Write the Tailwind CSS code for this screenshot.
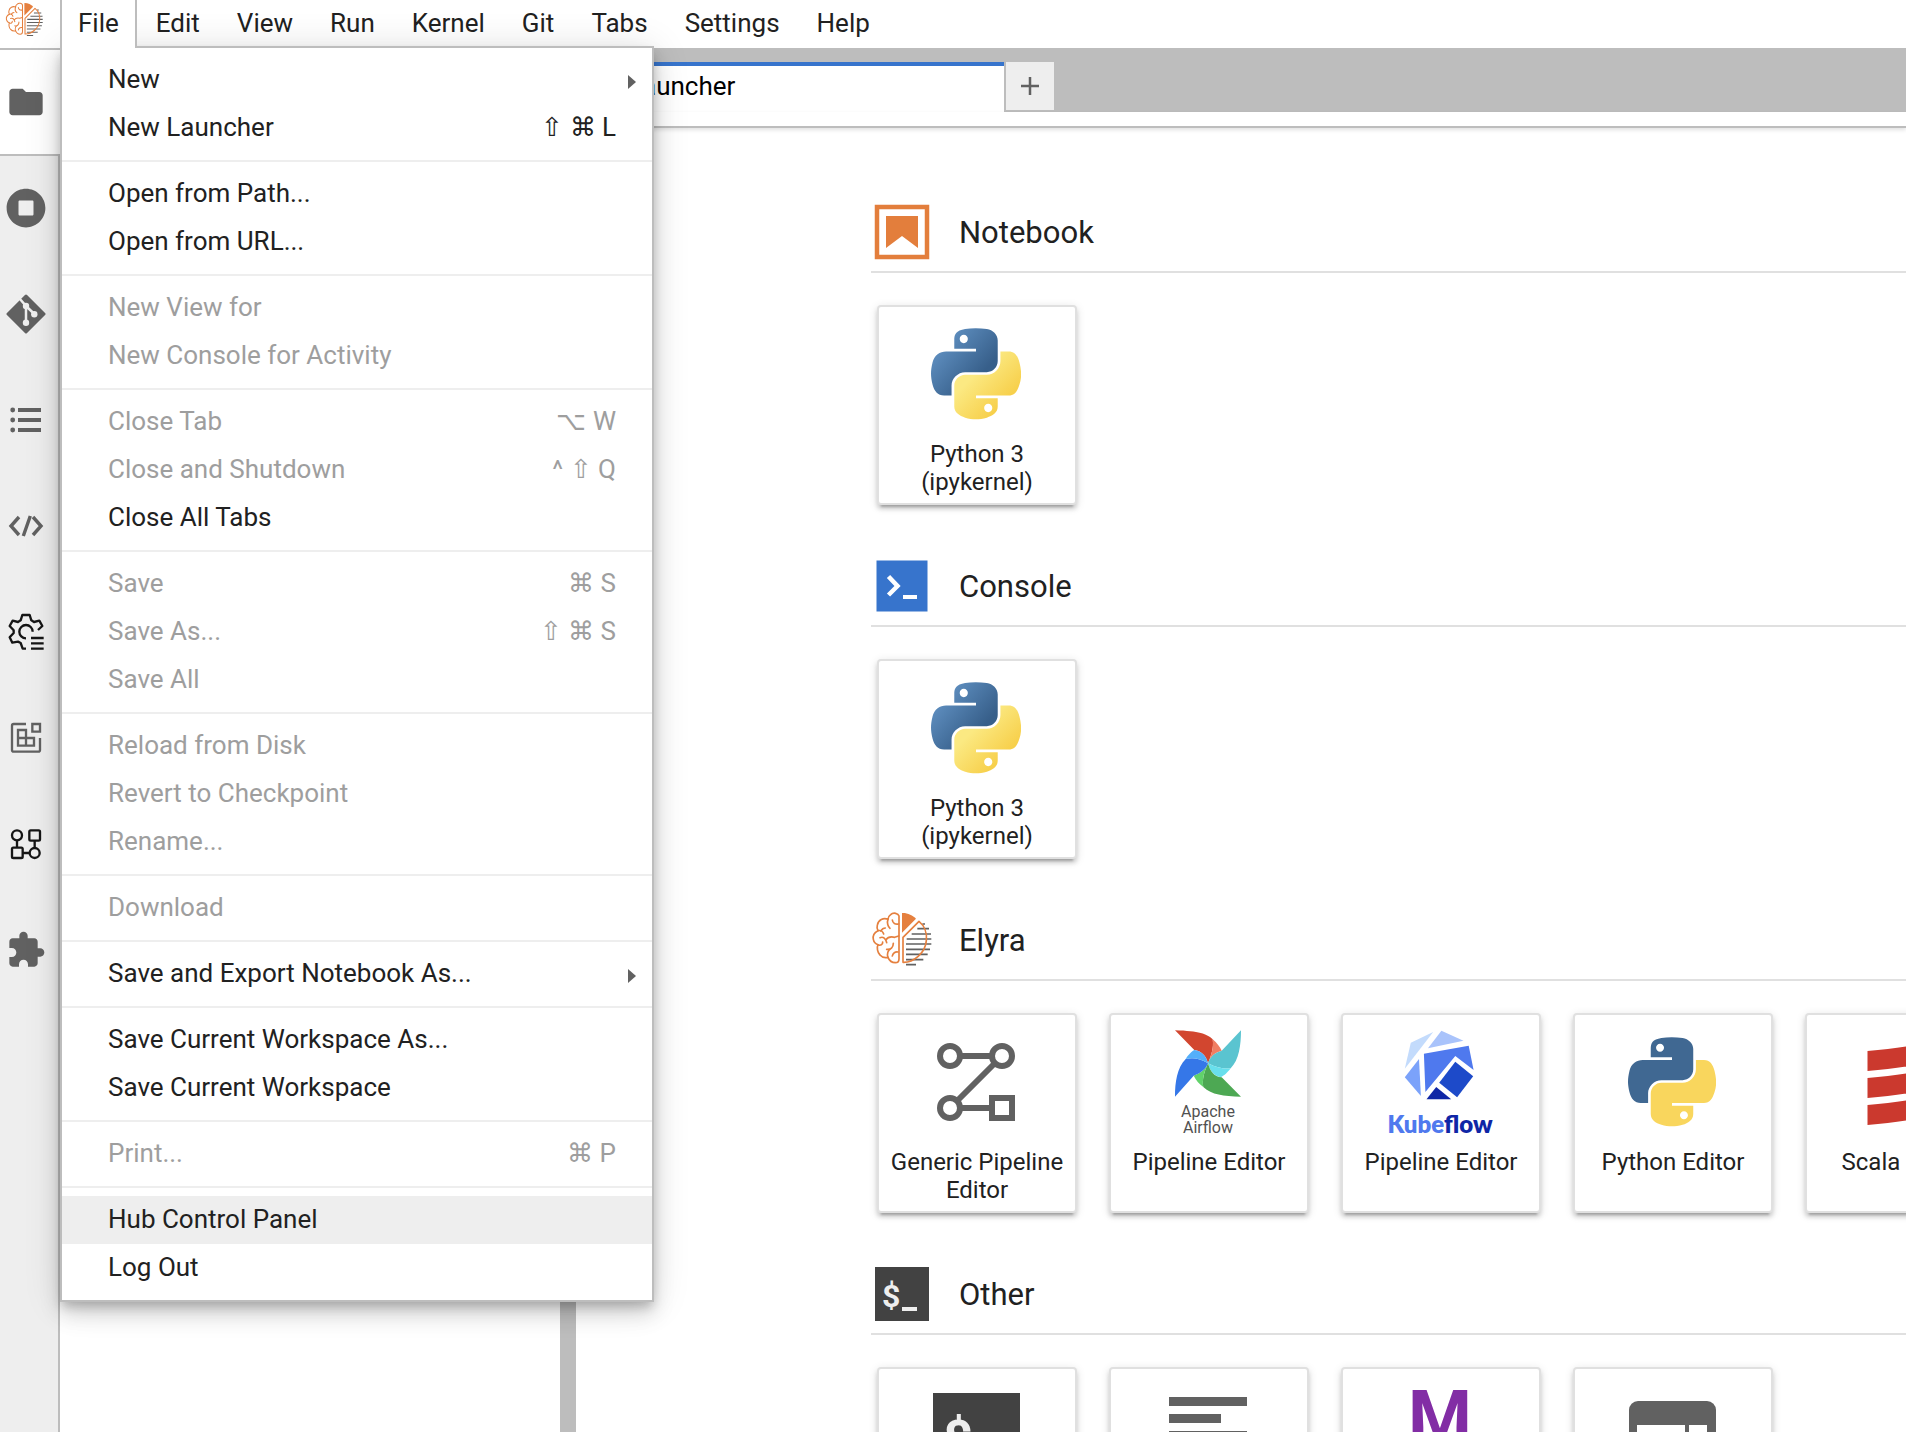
<!DOCTYPE html>
<html lang="en">
<head>
  <meta charset="UTF-8" />
  <meta name="viewport" content="width=device-width, initial-scale=1" />
  <title>JupyterLab</title>
  <script src="https://cdn.jsdelivr.net/npm/@tailwindcss/browser@4"></script>
</head>
<body class="flex h-screen flex-col overflow-hidden bg-white font-['Roboto','Noto_Sans',sans-serif] text-[26px] text-[#212121]">

<!-- Shared icons -->
<svg class="hidden" aria-hidden="true">
  <symbol id="elyra" viewBox="33 24 192 192">
    <g stroke="#616161" stroke-width="5">
      <path d="M187 72h8M172 86h35M155 102h58M140 117h74M138 132h76M138 148h72M138 163h65M138 179h52M138 194h30" />
    </g>
    <g fill="none" stroke="#e5803f" stroke-width="5" stroke-linecap="round" stroke-linejoin="round">
      <path d="M117 48C115 40 100 36 92 44C86 48 84 54 84 58C70 52 55 60 52 75C50 82 52 88 54 92C42 98 38 108 40 118C42 128 48 132 54 134C50 142 52 158 60 165C66 172 76 174 84 172C88 182 96 188 106 188C114 188 117 184 117 176Z" />
      <path d="M84 58C80 68 84 80 90 85M97 60C98 70 106 74 116 72M54 92C62 90 69 95 71 102M62 93C66 87 72 84 76 84M60 113C70 109 77 115 80 128M77 120C82 113 92 109 104 112L116 108M54 134C61 138 69 134 68 126M100 130C100 142 92 150 80 148M84 172C80 162 84 150 92 146M97 168C98 160 106 154 114 156" />
      <path d="M129 112L177 64C192 76 202 98 199 122C196 160 160 188 129 187Z" />
    </g>
    <path fill="#e5803f" d="M126 39C142 38 158 46 168 56L126 98Z" />
  </symbol>
  <symbol id="python" viewBox="0 0 111 113">
    <path fill-rule="evenodd" d="M54.92 0C50.34.02 45.96.41 42.11 1.09 30.76 3.1 28.7 7.29 28.7 15.03V25.25H55.51V28.66H18.64C10.85 28.66 4.02 33.34 1.89 42.25-.57 52.46-.68 58.84 1.89 69.5 3.79 77.44 8.35 83.09 16.14 83.09H25.36V70.84C25.36 61.99 33.01 54.19 42.11 54.19H68.89C76.34 54.19 82.29 48.05 82.29 40.56V15.03C82.29 7.77 76.16 2.31 68.89 1.09 64.28.33 59.5-.02 54.92 0ZM40.42 8.22C43.19 8.22 45.45 10.52 45.45 13.34 45.45 16.16 43.19 18.44 40.42 18.44 37.64 18.44 35.39 16.16 35.39 13.34 35.39 10.52 37.64 8.22 40.42 8.22Z" />
    <path fill="var(--py-yellow)" fill-rule="evenodd" d="M85.64 28.66V40.56C85.64 49.79 77.81 57.56 68.89 57.56H42.11C34.77 57.56 28.7 63.84 28.7 71.19V96.72C28.7 103.99 35.02 108.26 42.11 110.34 50.59 112.84 58.73 113.29 68.89 110.34 75.64 108.39 82.29 104.46 82.29 96.72V86.5H55.51V83.09H95.7C103.49 83.09 106.4 77.66 109.11 69.5 111.91 61.1 111.79 53.03 109.11 42.25 107.18 34.49 103.5 28.66 95.7 28.66ZM70.58 93.31C73.35 93.31 75.61 95.59 75.61 98.41 75.61 101.23 73.35 103.53 70.58 103.53 67.81 103.53 65.54 101.23 65.54 98.41 65.54 95.59 67.81 93.31 70.58 93.31Z" />
  </symbol>
</svg>
<svg class="absolute size-0" aria-hidden="true">
  <defs>
    <linearGradient id="pyBlue" x1="0" y1="0.1" x2="0.8" y2="0.8"><stop offset="0.1" stop-color="#6394c6" /><stop offset="0.9" stop-color="#375f8a" /></linearGradient>
    <linearGradient id="pyYellow" x1="0.2" y1="0.2" x2="0.8" y2="0.8"><stop offset="0.2" stop-color="#fbe982" /><stop offset="0.9" stop-color="#f7d04c" /></linearGradient>
  </defs>
</svg>

<!-- Menu bar -->
<header class="flex h-[50px] shrink-0 border-b-2 border-[#bdbdbd]">
  <div class="w-[60px] pl-[5px]">
    <svg class="size-10"><use href="#elyra" /></svg>
  </div>
  <nav class="flex h-12 gap-px">
    <div class="relative">
      <button class="relative z-20 h-12 border-x-2 border-[#bdbdbd] bg-white px-4 pb-[2px]">File</button>
      <ul id="fileMenu" role="menu" class="absolute top-[46px] left-0 z-10 w-[594px] border-2 border-[#bdbdbd] bg-white py-2 shadow-[0_6px_10px_-2px_rgba(0,0,0,0.2),0_12px_20px_rgba(0,0,0,0.14),0_2px_36px_rgba(0,0,0,0.12)]"></ul>
    </div>
    <button class="border-x-2 border-transparent px-4 pb-[2px]">Edit</button>
    <button class="border-x-2 border-transparent px-4 pb-[2px]">View</button>
    <button class="border-x-2 border-transparent px-4 pb-[2px]">Run</button>
    <button class="border-x-2 border-transparent px-4 pb-[2px]">Kernel</button>
    <button class="border-x-2 border-transparent px-4 pb-[2px]">Git</button>
    <button class="border-x-2 border-transparent px-4 pb-[2px]">Tabs</button>
    <button class="border-x-2 border-transparent px-4 pb-[2px]">Settings</button>
    <button class="border-x-2 border-transparent px-4 pb-[2px]">Help</button>
  </nav>
</header>

<div class="flex min-h-0 flex-1">
  <!-- Left activity bar -->
  <aside class="flex w-[60px] shrink-0 flex-col bg-[#eeeeee]">
    <button aria-label="File Browser" class="h-[106px] border-b-2 border-[#bdbdbd] bg-white pl-[6px]">
      <svg class="size-10" viewBox="0 0 24 24" fill="#616161"><path d="M10 4H4c-1.1 0-1.99.9-1.99 2L2 18c0 1.1.9 2 2 2h16c1.1 0 2-.9 2-2V8c0-1.1-.9-2-2-2h-8l-2-2z" /></svg>
    </button>
    <button aria-label="Running Terminals and Kernels" class="h-[106px] border-r-2 border-[#bdbdbd] pb-[2px] pl-[6px]">
      <svg class="size-10" viewBox="0 0 512 512" fill="#616161"><path d="M256 8C119 8 8 119 8 256s111 248 248 248 248-111 248-248S393 8 256 8zm96 328c0 8.8-7.2 16-16 16H176c-8.8 0-16-7.2-16-16V176c0-8.8 7.2-16 16-16h160c8.8 0 16 7.2 16 16v160z" /></svg>
    </button>
    <button aria-label="Git" class="h-[106px] border-r-2 border-[#bdbdbd] pb-[2px] pl-[6px]">
      <svg class="size-10" viewBox="0 0 40 40"><path d="M20 2L38 20L20 38L2 20Z" fill="#616161" stroke="#616161" stroke-width="3" stroke-linejoin="round" /><g stroke="#eeeeee" stroke-width="2.5"><path d="M13.5 4.5L20 12V28M20 12L28.3 20" fill="none" /><g fill="#eeeeee" stroke="none"><circle cx="20" cy="12" r="3.2" /><circle cx="20" cy="28.7" r="3.2" /><circle cx="28.3" cy="20.3" r="3.2" /></g></g></svg>
    </button>
    <button aria-label="Table of Contents" class="h-[106px] border-r-2 border-[#bdbdbd] pb-[2px] pl-[6px]">
      <svg class="size-10" viewBox="0 0 40 40" fill="#616161"><circle cx="6.7" cy="10" r="2.4" /><circle cx="6.7" cy="20" r="2.4" /><circle cx="6.7" cy="30" r="2.4" /><path d="M12 8h23v4H12zM12 18h23v4H12zM12 28h23v4H12z" /></svg>
    </button>
    <button aria-label="Code Snippets" class="h-[106px] border-r-2 border-[#bdbdbd] pb-[2px] pl-[6px]">
      <svg class="size-10" viewBox="0 0 40 40" fill="none" stroke="#616161" stroke-width="3.4"><path d="M13 11L5 20L13 29M27 11L35 20L27 29M24.3 10L17.3 30" /></svg>
    </button>
    <button aria-label="Runtimes" class="h-[106px] border-r-2 border-[#bdbdbd] pb-[2px] pl-[6px]">
      <svg class="size-10" viewBox="18 156 120 120" fill="none" stroke="#161616" stroke-width="7" stroke-linejoin="round"><path d="M78 266H68L62 249L54 245L37 248L29 232L41 219V211L29 198L38 182L54 186L62 181L67 165H89L94 181L102 186L118 182L127 198L114 210M98 215A20 20 0 1 0 78 235M93 234H131M93 250H131M93 266H131" /></svg>
    </button>
    <button aria-label="Component Catalogs" class="h-[106px] border-r-2 border-[#bdbdbd] pb-[2px] pl-[6px]">
      <svg class="size-10" viewBox="18 474 120 120" fill="none" stroke="#616161" stroke-width="7"><path d="M78 492H41Q36 492 36 497V570Q36 575 41 575H115Q120 575 120 570V534M97 492H120V515H97ZM54 510H78V534H54ZM54 534H78V557H54ZM78 534H102V557H78Z" /></svg>
    </button>
    <button aria-label="Pipelines" class="h-[106px] border-r-2 border-[#bdbdbd] pb-[2px] pl-[6px]">
      <svg class="size-10" viewBox="18 792 120 120" fill="none" stroke="#161616" stroke-width="7"><circle cx="51" cy="826" r="15" /><rect x="88" y="811" width="32" height="31" rx="4" /><rect x="36" y="863" width="32" height="31" rx="4" /><circle cx="104" cy="879" r="15" /><path d="M51 841V863M104 841V864M68 879H89" /></svg>
    </button>
    <button aria-label="Extension Manager" class="h-[106px] border-r-2 border-[#bdbdbd] pb-[2px] pl-[6px]">
      <svg class="size-10" viewBox="0 0 24 24" fill="#616161"><path d="M20.5 11H19V7c0-1.1-.9-2-2-2h-4V3.5C13 2.12 11.88 1 10.5 1S8 2.12 8 3.5V5H4c-1.1 0-1.99.9-1.99 2v3.8H3.5c1.49 0 2.7 1.21 2.7 2.7s-1.21 2.7-2.7 2.7H2V20c0 1.1.9 2 2 2h3.8v-1.5c0-1.49 1.21-2.7 2.7-2.7 1.49 0 2.7 1.21 2.7 2.7V22H17c1.1 0 2-.9 2-2v-4h1.5c1.38 0 2.5-1.12 2.5-2.5S21.88 11 20.5 11z" /></svg>
    </button>
    <div class="flex-1 border-r-2 border-[#bdbdbd]"></div>
  </aside>

  <!-- File browser panel and splitter -->
  <section class="w-[500px] shrink-0 bg-white"></section>
  <div class="w-4 shrink-0 bg-[#bdbdbd]"></div>

  <!-- Dock -->
  <main class="flex min-w-0 flex-1 flex-col">
    <div class="flex h-[62px] shrink-0 items-start bg-[#bdbdbd] pt-3">
      <div role="tab" class="flex h-[50px] w-[428px] items-start gap-2 border-t-4 border-[#3774cc] bg-white pl-3 leading-10 text-black">
        <svg class="mt-1 size-8" viewBox="0 0 24 24" fill="#616161"><path d="M19 19H5V5h7V3H5a2 2 0 0 0-2 2v14a2 2 0 0 0 2 2h14c1.1 0 2-.9 2-2v-7h-2v7zM14 3v2h3.59l-9.83 9.83 1.41 1.41L19 6.41V10h2V3h-7z" /></svg>
        Launcher
      </div>
      <button aria-label="New Launcher" class="ml-[2px] flex size-12 items-center justify-center bg-[#eeeeee]">
        <svg class="size-5" viewBox="0 0 20 20" stroke="#616161" stroke-width="2.5"><path d="M10 1V19M1 10H19" /></svg>
      </button>
    </div>
    <div class="h-4 shrink-0 border-b-2 border-[#bdbdbd] shadow-[0_2px_4px_rgba(0,0,0,0.12)]"></div>

    <div class="min-h-0 flex-1 overflow-hidden pt-[72px] pl-[295px]">
      <section class="mb-[49px]">
        <div class="mb-8 flex items-center gap-6 border-b-2 border-[#e0e0e0] pb-[7px]">
          <svg class="size-16" viewBox="1 0 64 64"><rect x="7" y="7" width="50" height="50" fill="none" stroke="#e37e3c" stroke-width="4.5" /><path d="M16 16H48V48L32 36L16 48Z" fill="#e37e3c" /></svg>
          <h2 class="pt-[2px] text-[31px]">Notebook</h2>
        </div>
        <div class="flex gap-8 pl-[6px]">
          <button class="flex size-[200px] shrink-0 flex-col items-center rounded border-2 border-[#e0e0e0] bg-white pt-[15px] shadow-[0_6px_2px_-4px_rgba(0,0,0,0.2),0_4px_4px_rgba(0,0,0,0.14),0_2px_10px_rgba(0,0,0,0.12)]">
            <svg class="size-[104px] shrink-0 [--py-yellow:url(#pyYellow)]" viewBox="0 0 104 104"><use href="#python" x="6" y="6" width="90" height="92" fill="url(#pyBlue)" /></svg>
            <span class="mt-[14px] text-2xl leading-7">Python 3<br />(ipykernel)</span>
          </button>
        </div>
      </section>

      <section class="mb-[49px]">
        <div class="mb-8 flex items-center gap-6 border-b-2 border-[#e0e0e0] pb-[7px]">
          <svg class="size-16" viewBox="1 0 64 64"><path d="M6.5 6.5H57.5V57.5H6.5Z" fill="#3774cc" /><path d="M18.5 22.5L27.5 32L18.5 41" fill="none" stroke="#ffffff" stroke-width="4.5" /><path d="M33 41H47V45H33Z" fill="#ffffff" /></svg>
          <h2 class="pt-[2px] text-[31px]">Console</h2>
        </div>
        <div class="flex gap-8 pl-[6px]">
          <button class="flex size-[200px] shrink-0 flex-col items-center rounded border-2 border-[#e0e0e0] bg-white pt-[15px] shadow-[0_6px_2px_-4px_rgba(0,0,0,0.2),0_4px_4px_rgba(0,0,0,0.14),0_2px_10px_rgba(0,0,0,0.12)]">
            <svg class="size-[104px] shrink-0 [--py-yellow:url(#pyYellow)]" viewBox="0 0 104 104"><use href="#python" x="6" y="6" width="90" height="92" fill="url(#pyBlue)" /></svg>
            <span class="mt-[14px] text-2xl leading-7">Python 3<br />(ipykernel)</span>
          </button>
        </div>
      </section>

      <section class="mb-[49px]">
        <div class="mb-8 flex items-center gap-6 border-b-2 border-[#e0e0e0] pb-[7px]">
          <svg class="size-16"><use href="#elyra" /></svg>
          <h2 class="pt-[2px] text-[31px]">Elyra</h2>
        </div>
        <div class="flex gap-8 pl-[6px]">
          <button class="flex size-[200px] shrink-0 flex-col items-center rounded border-2 border-[#e0e0e0] bg-white pt-[15px] shadow-[0_6px_2px_-4px_rgba(0,0,0,0.2),0_4px_4px_rgba(0,0,0,0.14),0_2px_10px_rgba(0,0,0,0.12)]">
            <svg class="size-[104px] shrink-0" viewBox="0 0 104 104" fill="none" stroke="#616161" stroke-width="6"><circle cx="25" cy="26" r="10" /><circle cx="77" cy="26" r="10" /><circle cx="25" cy="78" r="10" /><path d="M67 68H87V88H67ZM35 26H67M70 33L32 71M35 78H67" /></svg>
            <span class="mt-[14px] text-2xl leading-7">Generic Pipeline Editor</span>
          </button>
          <button class="flex size-[200px] shrink-0 flex-col items-center rounded border-2 border-[#e0e0e0] bg-white pt-[15px] shadow-[0_6px_2px_-4px_rgba(0,0,0,0.2),0_4px_4px_rgba(0,0,0,0.14),0_2px_10px_rgba(0,0,0,0.12)]">
            <svg class="size-[104px] shrink-0 overflow-visible" viewBox="0 0 104 104">
              <path fill="#d2462f" d="M18 .3C42 1 50 4 55.7 9.3C57 18 54 26 51 33.3C49 25 44 21 37.3 20Z" />
              <path fill="#f07e62" d="M55.7 9.3C60 13 63 17 64.7 20.7C57 23 53 27 51 33.3C54 26 57 18 55.7 9.3Z" />
              <path fill="#5ac4d0" d="M84 .3L64.7 20.7C57 23 53 27 51 33.3C60 38 67 39 73.7 38.3C82 30 84 15 84 .3Z" />
              <path fill="#68dfec" d="M73.7 38.3C70 43 68 45 63.5 47.3C57 46 53 41 51 33.3C60 38 67 39 73.7 38.3Z" />
              <path fill="#4da853" d="M84 66.7L64.7 47.3C57 47 53 41 51 33.3C47 42 45 50 46.3 57C55 65 66 66 84 66.7Z" />
              <path fill="#61d26a" d="M51 33.3C47 42 45 50 46.3 57C42 54 39 50 36.7 45.7C44 43 49 39 51 33.3Z" />
              <path fill="#3577e8" d="M18 66.7L36.7 45.7C44 43 49 39 51 33.3C43 28 35 27.5 28.7 29C20 38 18 52 18 66.7Z" />
              <path fill="#54affa" d="M28.7 29C31 25 35 21 37.3 20C44 21 49 25 51 33.3C43 28 35 27.5 28.7 29Z" />
              <g fill="#515151" font-size="16" text-anchor="middle"><text x="51" y="87">Apache</text><text x="51" y="103">Airflow</text></g>
            </svg>
            <span class="mt-[14px] text-2xl leading-7">Pipeline Editor</span>
          </button>
          <button class="flex size-[200px] shrink-0 flex-col items-center rounded border-2 border-[#e0e0e0] bg-white pt-[15px] shadow-[0_6px_2px_-4px_rgba(0,0,0,0.2),0_4px_4px_rgba(0,0,0,0.14),0_2px_10px_rgba(0,0,0,0.12)]">
            <svg class="size-[104px] shrink-0 overflow-visible" viewBox="0 0 104 104">
              <path fill="#c3dbfc" d="M21.8 12.7L44.2 2L15.8 38.7Z" />
              <path fill="#a9c3fb" d="M52.4 .7L74.5 10.7L39 18.3Z" />
              <path fill="#4f79ee" d="M34.9 23.7L79.7 15.7L84.6 40L66.3 26L36.4 62Z" />
              <path fill="#7ba2fa" d="M30 29L31.9 66L15.8 47.3Z" />
              <path fill="#1d4ac9" d="M66.3 31.7L84.2 46.3L68.1 67.3L50.2 52.7Z" />
              <path fill="#0f26a6" d="M47.2 57L62.2 69.3H37.5Z" />
              <text x="51" y="103" text-anchor="middle" class="font-['Lato',sans-serif] font-extrabold" font-size="24" fill="#4f79ee">Kube<tspan fill="#0f26a6">flow</tspan></text>
            </svg>
            <span class="mt-[14px] text-2xl leading-7">Pipeline Editor</span>
          </button>
          <button class="flex size-[200px] shrink-0 flex-col items-center rounded border-2 border-[#e0e0e0] bg-white pt-[15px] shadow-[0_6px_2px_-4px_rgba(0,0,0,0.2),0_4px_4px_rgba(0,0,0,0.14),0_2px_10px_rgba(0,0,0,0.12)]">
            <svg class="size-[104px] shrink-0 [--py-yellow:#f9d65d]" viewBox="0 0 104 104"><use href="#python" x="7" y="7" width="88" height="90" fill="#406892" /></svg>
            <span class="mt-[14px] text-2xl leading-7">Python Editor</span>
          </button>
          <button class="flex size-[200px] shrink-0 flex-col items-center rounded border-2 border-[#e0e0e0] bg-white pt-[15px] shadow-[0_6px_2px_-4px_rgba(0,0,0,0.2),0_4px_4px_rgba(0,0,0,0.14),0_2px_10px_rgba(0,0,0,0.12)]">
            <svg class="size-[104px] shrink-0" viewBox="0 0 104 104" fill="#cb392e"><path d="M14.5 21Q62 17 89.5 8V28Q62 37 14.5 41ZM14.5 48Q62 44 89.5 35V55Q62 64 14.5 68ZM14.5 75Q62 71 89.5 62V82Q62 91 14.5 95Z" /></svg>
            <span class="mt-[14px] text-2xl leading-7">Scala Editor</span>
          </button>
        </div>
      </section>

      <section>
        <div class="mb-8 flex items-center gap-6 border-b-2 border-[#e0e0e0] pb-[7px]">
          <svg class="size-16" viewBox="1 0 64 64"><path d="M5 5H59V59H5Z" fill="#424242" /><text x="12" y="45" font-size="32" font-weight="700" fill="#eeeeee">$</text><path d="M32 45H47V49H32Z" fill="#eeeeee" /></svg>
          <h2 class="pt-[2px] text-[31px]">Other</h2>
        </div>
        <div class="flex gap-8 pl-[6px]">
          <button aria-label="Terminal" class="flex size-[200px] shrink-0 flex-col items-center rounded border-2 border-[#e0e0e0] bg-white pt-[15px] shadow-[0_6px_2px_-4px_rgba(0,0,0,0.2),0_4px_4px_rgba(0,0,0,0.14),0_2px_10px_rgba(0,0,0,0.12)]">
            <svg class="size-[104px] shrink-0" viewBox="0 0 104 104"><path d="M8 9H95V95H8Z" fill="#424242" /><text x="18" y="73" font-size="52" font-weight="700" fill="#eeeeee">$</text><path d="M52 73H76V79H52Z" fill="#eeeeee" /></svg>
          </button>
          <button aria-label="Text File" class="flex size-[200px] shrink-0 flex-col items-center rounded border-2 border-[#e0e0e0] bg-white pt-[15px] shadow-[0_6px_2px_-4px_rgba(0,0,0,0.2),0_4px_4px_rgba(0,0,0,0.14),0_2px_10px_rgba(0,0,0,0.12)]">
            <svg class="size-[104px] shrink-0" viewBox="0 0 104 104" fill="#616161"><path d="M12 13H90V22H12ZM12 30H64V39H12ZM12 47H90V56H12ZM12 64H64V73H12ZM12 81H90V90H12Z" /></svg>
          </button>
          <button aria-label="Markdown File" class="flex size-[200px] shrink-0 flex-col items-center rounded border-2 border-[#e0e0e0] bg-white pt-[15px] shadow-[0_6px_2px_-4px_rgba(0,0,0,0.2),0_4px_4px_rgba(0,0,0,0.14),0_2px_10px_rgba(0,0,0,0.12)]">
            <svg class="size-[104px] shrink-0" viewBox="0 0 104 104" fill="#822da5"><text x="51" y="58" font-size="73" font-weight="700" text-anchor="middle">M</text><path d="M24 70H80L52 98Z" /></svg>
          </button>
          <button aria-label="Show Contextual Help" class="flex size-[200px] shrink-0 flex-col items-center rounded border-2 border-[#e0e0e0] bg-white pt-[15px] shadow-[0_6px_2px_-4px_rgba(0,0,0,0.2),0_4px_4px_rgba(0,0,0,0.14),0_2px_10px_rgba(0,0,0,0.12)]">
            <svg class="size-[104px] shrink-0" viewBox="0 0 104 104"><rect x="8" y="17" width="87" height="70" rx="9" fill="#616161" /><path d="M16 41H64V79H16ZM68 41H86V79H68Z" fill="#ffffff" /></svg>
          </button>
        </div>
      </section>
    </div>
  </main>
</div>

<script>
  // Each inner array is a group; groups are separated by a divider
  const groups = [
    [{ label: 'New', submenu: true }, { label: 'New Launcher', keys: '⇧ ⌘ L' }],
    [{ label: 'Open from Path...' }, { label: 'Open from URL...' }],
    [{ label: 'New View for', disabled: true }, { label: 'New Console for Activity', disabled: true }],
    [{ label: 'Close Tab', keys: '⌥ W', disabled: true }, { label: 'Close and Shutdown', keys: '^ ⇧ Q', disabled: true }, { label: 'Close All Tabs' }],
    [{ label: 'Save', keys: '⌘ S', disabled: true }, { label: 'Save As...', keys: '⇧ ⌘ S', disabled: true }, { label: 'Save All', disabled: true }],
    [{ label: 'Reload from Disk', disabled: true }, { label: 'Revert to Checkpoint', disabled: true }, { label: 'Rename...', disabled: true }],
    [{ label: 'Download', disabled: true }],
    [{ label: 'Save and Export Notebook As...', submenu: true }],
    [{ label: 'Save Current Workspace As...' }, { label: 'Save Current Workspace' }],
    [{ label: 'Print...', keys: '⌘ P', disabled: true }],
    [{ label: 'Hub Control Panel', active: true }, { label: 'Log Out' }]
  ];

  const menu = document.getElementById('fileMenu');

  // Shift and control glyphs come from DejaVu, which draws them wider
  const formatKeys = keys => keys.replace(/[⇧^]/g, '<span class="font-[\'DejaVu_Sans\',sans-serif] leading-none">$&</span>');

  groups.forEach((group, i) => {
    if (i > 0) {
      const divider = document.createElement('li');
      divider.setAttribute('role', 'separator');
      divider.className = 'my-2 h-[2px] bg-[#eeeeee]';
      menu.appendChild(divider);
    }
    group.forEach(item => {
      const li = document.createElement('li');
      li.innerHTML = `
        <button role="menuitem" ${item.disabled ? 'disabled' : ''} class="flex h-12 w-full items-center justify-between pb-[2px] pl-[46px] ${item.submenu ? 'pr-4' : 'pr-9'} ${item.active ? 'bg-[#eeeeee]' : ''} disabled:text-[#9e9e9e]">
          <span>${item.label}</span>
          ${item.keys ? `<span>${formatKeys(item.keys)}</span>` : ''}
          ${item.submenu ? '<svg class="mt-[6px] h-[14px] w-2" viewBox="0 0 8 14" fill="#616161"><path d="M0 0L8 7L0 14Z" /></svg>' : ''}
        </button>
      `;
      menu.appendChild(li);
    });
  });
</script>
</body>
</html>
